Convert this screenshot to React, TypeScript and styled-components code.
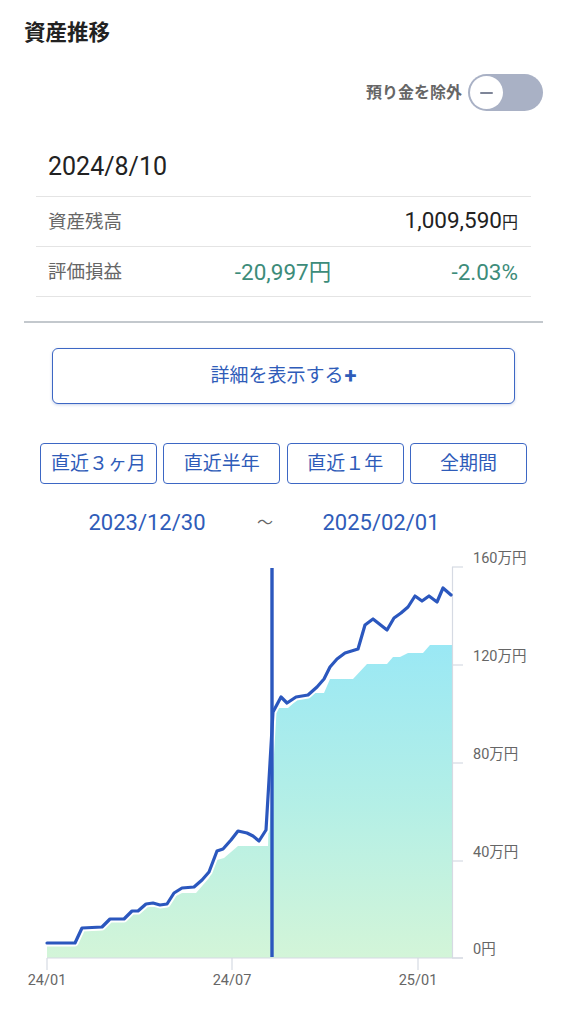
import styled, { createGlobalStyle } from "styled-components";

const FONT = `Roboto, "Noto Sans CJK JP", sans-serif`;
const BLUE = "#2f5cb9";
const GREEN = "#3d8c7a";

const GlobalStyle = createGlobalStyle`
  html, body {
    margin: 0;
    padding: 0;
    background: #fff;
    font-family: ${FONT};
  }
`;

// chart data, in page pixels (svg viewBox is aligned with the page)
const LINE: [number, number][] = [
  [47, 943], [75, 943], [82, 928], [102, 927], [110, 919], [124, 919], [132, 911], [138, 911],
  [146, 904], [153, 903], [160, 905], [167, 904], [174, 893], [182, 888], [194, 887], [202, 880],
  [209, 872], [217, 851], [223, 849], [231, 840], [238, 831], [247, 833], [253, 836], [259, 841],
  [266, 830], [269, 780], [273, 712], [281, 697], [287, 703], [296, 697], [308, 695], [317, 687],
  [324, 679], [330, 667], [337, 659], [345, 653], [358, 649], [365, 625], [373, 619], [387, 630],
  [394, 618], [401, 613], [408, 607], [415, 596], [422, 601], [429, 596], [437, 602], [443, 588],
  [451, 595],
];

const FILL: [number, number][] = [
  [47, 946], [75, 946], [82, 931], [102, 930], [110, 922], [124, 922], [132, 914], [138, 914],
  [146, 907], [167, 907], [174, 897], [182, 893], [196, 893], [209, 878], [217, 860], [224, 858],
  [238, 846], [258, 846], [268, 846], [272, 708], [288, 708], [297, 700], [315, 693], [324, 693],
  [330, 679], [353, 679], [367, 664], [387, 664], [393, 657], [400, 657], [408, 653], [423, 653],
  [430, 645], [452, 645],
];

const Y_TICKS = [
  { y: 567, label: "160万円" },
  { y: 665, label: "120万円" },
  { y: 763, label: "80万円" },
  { y: 861, label: "40万円" },
  { y: 958, label: "0円" },
];

const X_TICKS = [
  { x: 47, label: "24/01" },
  { x: 232, label: "24/07" },
  { x: 418, label: "25/01" },
];

const RANGES = ["直近３ヶ月", "直近半年", "直近１年", "全期間"];

const toPts = (p: [number, number][]) => p.map(([x, y]) => `${x},${y}`).join(" ");

export default function App() {
  return (
    <>
      <GlobalStyle />
      <Page>
        <Title>資産推移</Title>

        <ToggleRow>
          <ToggleLabel>預り金を除外</ToggleLabel>
          <Track>
            <Knob>
              <Minus />
            </Knob>
          </Track>
        </ToggleRow>

        <Table>
          <DateRow>2024/8/10</DateRow>
          <InfoRow>
            <RowLabel>資産残高</RowLabel>
            <Amount $span>
              1,009,590<SmallYen>円</SmallYen>
            </Amount>
          </InfoRow>
          <InfoRow>
            <RowLabel>評価損益</RowLabel>
            <Amount $green $center>-20,997円</Amount>
            <Amount $green>-2.03%</Amount>
          </InfoRow>
        </Table>

        <Divider />

        <DetailButton>
          詳細を表示する<Plus>+</Plus>
        </DetailButton>

        <RangeRow>
          {RANGES.map((r) => (
            <RangeButton key={r}>{r}</RangeButton>
          ))}
        </RangeRow>

        <PeriodRow>
          <PeriodDate>2023/12/30</PeriodDate>
          <Tilde>～</Tilde>
          <PeriodDate>2025/02/01</PeriodDate>
        </PeriodRow>

        <Chart viewBox="0 537 567 463" width={567} height={463}>
          <defs>
            <linearGradient id="fillGrad" gradientUnits="userSpaceOnUse" x1="0" y1="620" x2="0" y2="958">
              <stop offset="0" stopColor="#96e7f7" />
              <stop offset="0.55" stopColor="#b4efe6" />
              <stop offset="1" stopColor="#d3f5d8" />
            </linearGradient>
          </defs>

          <polygon points={`${toPts(FILL)} 452,958 47,958`} fill="url(#fillGrad)" />

          {/* axes */}
          <line x1={47} y1={958} x2={463} y2={958} stroke="#d6dae3" strokeWidth={1.2} />
          <line x1={452.5} y1={567} x2={452.5} y2={958} stroke="#d6dae3" strokeWidth={1.2} />
          {Y_TICKS.map((t) => (
            <g key={t.label}>
              <line x1={452} y1={t.y} x2={463} y2={t.y} stroke="#d6dae3" strokeWidth={1.2} />
              <AxisText x={473} y={t.y - 4}>{t.label}</AxisText>
            </g>
          ))}
          {X_TICKS.map((t) => (
            <g key={t.label}>
              <line x1={t.x} y1={958} x2={t.x} y2={970} stroke="#d6dae3" strokeWidth={1.2} />
              <AxisText x={t.x} y={985} textAnchor="middle">{t.label}</AxisText>
            </g>
          ))}

          {/* valuation line */}
          <polyline points={toPts(LINE)} fill="none" stroke="#fff" strokeWidth={7} strokeLinejoin="round" />
          <polyline points={toPts(LINE)} fill="none" stroke="#2b57be" strokeWidth={3.2} strokeLinejoin="round" strokeLinecap="round" />

          {/* selected date marker */}
          <line x1={272} y1={568} x2={272} y2={957} stroke="#2b57be" strokeWidth={3.4} />
        </Chart>
      </Page>
    </>
  );
}

const Page = styled.div`
  width: 567px;
  box-sizing: border-box;
  padding: 19px 24px 0;
  display: flex;
  flex-direction: column;
  overflow: hidden;
`;

const Title = styled.h1`
  margin: 0;
  font: 700 21.5px/28px ${FONT};
  color: #222;
`;

const ToggleRow = styled.div`
  margin-top: 27px;
  display: flex;
  justify-content: flex-end;
  align-items: center;
  gap: 6px;
`;

const ToggleLabel = styled.span`
  font: 700 16px/20px ${FONT};
  color: #666;
`;

const Track = styled.div`
  width: 75px;
  height: 37px;
  box-sizing: border-box;
  border-radius: 19px;
  background: #a9b1c5;
  padding: 2px;
  display: flex;
  align-items: center;
`;

const Knob = styled.div`
  width: 33px;
  height: 33px;
  border-radius: 50%;
  background: #fff;
  display: flex;
  align-items: center;
  justify-content: center;
`;

const Minus = styled.span`
  width: 13px;
  height: 2px;
  border-radius: 1px;
  background: #7e8598;
`;

const Table = styled.div`
  margin: 26px 12px 0;
  display: flex;
  flex-direction: column;
`;

const DateRow = styled.div`
  height: 60px;
  box-sizing: border-box;
  padding: 0 12px;
  display: flex;
  align-items: center;
  border-bottom: 1px solid #e4e4e4;
  font: 400 25px/30px ${FONT};
  color: #222;
`;

const InfoRow = styled.div`
  height: 50px;
  box-sizing: border-box;
  padding: 0 13px 0 12px;
  display: grid;
  grid-template-columns: 1fr 1fr 1fr;
  align-items: center;
  border-bottom: 1px solid #e4e4e4;
`;

const RowLabel = styled.span`
  font: 400 18.5px/24px ${FONT};
  color: #666;
`;

const Amount = styled.span<{ $green?: boolean; $center?: boolean; $span?: boolean }>`
  font: 400 22.5px/28px ${FONT};
  color: ${(p) => (p.$green ? GREEN : "#222")};
  justify-self: ${(p) => (p.$center ? "center" : "end")};
  grid-column: ${(p) => (p.$span ? "2 / 4" : "auto")};
  white-space: nowrap;
`;

const SmallYen = styled.span`
  font-size: 16px;
`;

const Divider = styled.hr`
  margin: 24px 0 0;
  border: none;
  height: 2px;
  background: #c3c8cd;
`;

const DetailButton = styled.button`
  margin: 25px 28px 0;
  height: 56px;
  border: 1.5px solid #3d67c4;
  border-radius: 6px;
  background: #fff;
  box-shadow: 0 1px 3px rgba(40, 80, 170, 0.25);
  color: ${BLUE};
  font: 400 19px/24px ${FONT};
  display: flex;
  align-items: center;
  justify-content: center;
  cursor: pointer;
`;

const Plus = styled.span`
  font-weight: 700;
  font-size: 22px;
  margin-left: 1px;
`;

const RangeRow = styled.div`
  margin: 39px 16px 0;
  display: grid;
  grid-template-columns: repeat(4, 1fr);
  gap: 6.5px;
`;

const RangeButton = styled.button`
  height: 41px;
  border: 1.5px solid #3d67c4;
  border-radius: 4px;
  background: #fff;
  color: ${BLUE};
  font: 400 19px/24px ${FONT};
  padding: 0;
  cursor: pointer;
`;

const PeriodRow = styled.div`
  margin-top: 25px;
  padding-left: 63px;
  height: 28px;
  display: flex;
  align-items: center;
  gap: 50px;
`;

const PeriodDate = styled.span`
  font: 400 22px/28px ${FONT};
  color: ${BLUE};
  width: 120px;
  text-align: center;
`;

const Tilde = styled.span`
  font: 400 16px/28px ${FONT};
  color: #666;
  margin-right: -2px;
`;

const Chart = styled.svg`
  display: block;
  margin: 0 -24px;
  flex-shrink: 0;
`;

const AxisText = styled.text`
  font: 400 14.5px ${FONT};
  fill: #666;
`;
